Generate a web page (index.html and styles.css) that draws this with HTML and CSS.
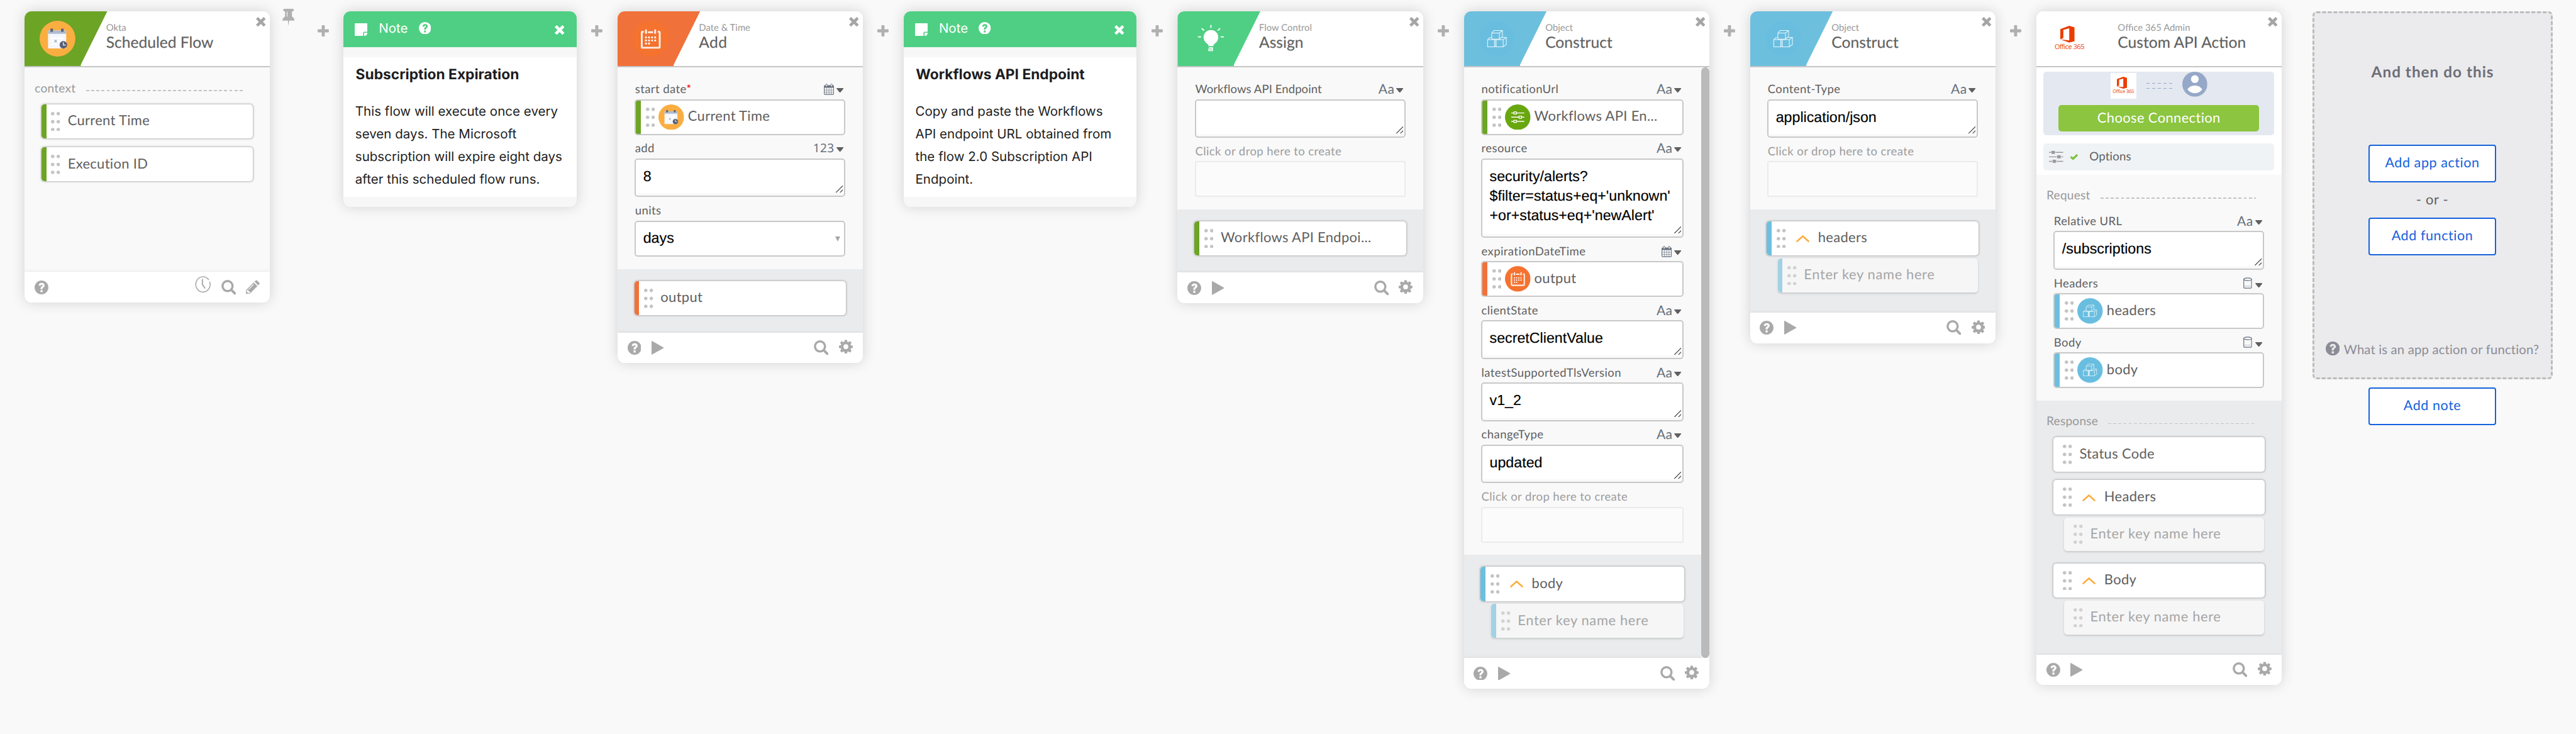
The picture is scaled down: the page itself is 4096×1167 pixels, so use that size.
FILE: index.html
```html
<!DOCTYPE html>
<html lang="en">
<head>
<meta charset="utf-8">
<title>Scheduled Flow</title>
<link rel="stylesheet" href="styles.css">
</head>
<body>
<svg class="sprite" aria-hidden="true">
  <symbol id="close" viewBox="0 0 20 20"><path d="M4.200 4.200l11.600 11.600M15.800 4.200L4.200 15.800" fill="none" stroke="currentColor" stroke-width="6" stroke-linecap="square" stroke-linejoin="round"/></symbol>
  <symbol id="plus" viewBox="0 0 22 22"><path d="M9.500 0h3a1.500 1.500 0 0 1 1.500 1.500V8h6.500A1.500 1.500 0 0 1 22 9.500v3a1.500 1.500 0 0 1-1.500 1.500H14v6.500a1.500 1.500 0 0 1-1.500 1.500h-3A1.500 1.500 0 0 1 8 20.500V14H1.500A1.500 1.500 0 0 1 0 12.500v-3A1.500 1.500 0 0 1 1.500 8H8V1.500A1.500 1.500 0 0 1 9.500 0z" fill="currentColor"/></symbol>
  <symbol id="pin" viewBox="0 0 24 34"><path d="M4 0h16a2.400 2.400 0 0 1 0 5h-1.200v10.500c3 1.500 5 4 5.200 7.500H13.200L12 34l-1.200-11H0c.2-3.500 2.200-6 5.200-7.500V5H4a2.400 2.400 0 0 1 0-5z" fill="currentColor"/><path d="M9.200 5.500v10" stroke="#f9f9f9" stroke-width="1.300"/></symbol>
  <symbol id="help" viewBox="0 0 28 28"><path fill-rule="evenodd" fill="currentColor" d="M14 0a14 14 0 1 0 0 28 14 14 0 0 0 0-28zM12 19.500h4.200v4.200H12zM8.200 9.900C8.800 6.500 11 4.700 14.300 4.700c3.500 0 6 2.100 6 5.100 0 2.300-1.200 3.400-2.700 4.400-1.200.8-1.500 1.200-1.500 2.300v.9h-4v-1.300c0-2 .8-3.100 2.400-4.100 1.100-.7 1.500-1.100 1.500-2 0-.9-.6-1.500-1.700-1.500-1.300 0-2 .8-2.300 2.400z"/></symbol>
  <symbol id="play" viewBox="0 0 24 27"><path d="M0 1.200Q0-.4 1.400.4L23.500 12.800q.9.700 0 1.400L1.400 26.600Q0 27.400 0 25.800z" fill="currentColor"/></symbol>
  <symbol id="search" viewBox="0 0 30 30"><circle cx="12.500" cy="12.500" r="10.200" fill="none" stroke="currentColor" stroke-width="4.400"/><path d="M20.500 20.500l7 7" stroke="currentColor" stroke-width="5" stroke-linecap="round"/></symbol>
  <symbol id="gear" viewBox="0 0 28 28"><path fill-rule="evenodd" fill="currentColor" d="M11.600.5h4.800l.7 3.900 1.900.8 3.300-2.300 3.400 3.400-2.300 3.300.8 1.900 3.800.6v4.800l-3.800.7-.8 1.900 2.300 3.300-3.400 3.400-3.300-2.300-1.900.8-.7 3.300h-4.800l-.7-3.300-1.900-.8-3.300 2.300-3.400-3.400 2.300-3.300-.8-1.900L0 16.900v-4.800l3.800-.6.8-1.900-2.300-3.300 3.400-3.400L9 5.200l1.900-.8zM14 9.300a4.900 4.900 0 1 0 0 9.800 4.900 4.900 0 0 0 0-9.800z"/></symbol>
  <symbol id="clock" viewBox="0 0 32 34"><path d="M27.500 7A14.500 15.500 0 1 0 30 12" fill="none" stroke="currentColor" stroke-width="2" stroke-linecap="round"/><path d="M15 6.500V17l5 7" fill="none" stroke="currentColor" stroke-width="2.400" stroke-linecap="round"/></symbol>
  <symbol id="pencil" viewBox="0 0 28 28"><path d="M0 28v-7.500L15.800 4.700l7.500 7.500L7.500 28zM17.500 3l2.300-2.300q1.400-1.300 2.800 0l4.700 4.700q1.400 1.400 0 2.800L25 10.500z" fill="currentColor"/><path d="M2 21.500L3 20l5 5-1.500 1H4.500v-2.500H2zM5.500 18.500L15.700 8.300" fill="none" stroke="#fff" stroke-width="1.500"/></symbol>
  <symbol id="note" viewBox="0 0 25 25"><path d="M1.500 0h22A1.500 1.500 0 0 1 25 1.500V16.500H18.500a2 2 0 0 0-2 2V25h-15A1.500 1.500 0 0 1 0 23.500v-22A1.500 1.500 0 0 1 1.500 0zM18.500 18.500H25Q24.500 24.500 18.500 25z" fill="currentColor"/></symbol>
  <symbol id="dots" viewBox="0 0 18 38"><g fill="currentColor"><circle cx="3.400" cy="3.500" r="3.400"/><circle cx="14.400" cy="3.500" r="3.400"/><circle cx="3.400" cy="19" r="3.400"/><circle cx="14.400" cy="19" r="3.400"/><circle cx="3.400" cy="34.500" r="3.400"/><circle cx="14.400" cy="34.500" r="3.400"/></g></symbol>
  <symbol id="chevron" viewBox="0 0 26 15"><path d="M2 13L13 3l11 10" fill="none" stroke="#fbae42" stroke-width="3.300" stroke-linecap="round"/></symbol>
  <symbol id="caret" viewBox="0 0 14 9"><path d="M.8 0h12.400q1.200.4.300 1.500L8.300 8q-1.300 1.400-2.600 0L.5 1.500Q-.4.400.8 0z" fill="#606060"/></symbol>
  <symbol id="grip" viewBox="0 0 14 14"><path d="M0 14L14 0M8 14l6-6" stroke="#444" stroke-width="1.500"/></symbol>
  <symbol id="month" viewBox="0 0 20 22"><g fill="none" stroke="#66717d"><rect x=".8" y="4" width="18.400" height="17" rx="1.200" stroke-width="1.400"/><path d="M.8 12.500h18.400M.8 16.700h18.400M5.500 8v13M10 8v13M14.500 8v13" stroke-width=".8"/></g><path d="M.8 3.500h18.400V8H.8z" fill="#66717d"/><rect x="3.500" y=".6" width="3" height="5.400" rx="1.400" fill="#fff" stroke="#66717d" stroke-width="1.200"/><rect x="13.500" y=".6" width="3" height="5.400" rx="1.400" fill="#fff" stroke="#66717d" stroke-width="1.200"/></symbol>
  <symbol id="object" viewBox="0 0 17 22"><g fill="none" stroke="#66717d" stroke-width="1.500"><ellipse cx="8.500" cy="3.600" rx="7.600" ry="2.600"/><path d="M.9 3.600v15.400q0 2.200 2.500 2.200h10.200q2.500 0 2.500-2.200V3.600"/><path d="M2.500 17h12" stroke-width=".8" stroke-dasharray="2 1"/></g></symbol>
  <symbol id="schedule" viewBox="-35 -35 70 70"><circle r="35" fill="#faae41"/><path d="M-18.500-16h35.500v35h-35.500z" fill="#f3f6fa"/><path d="M-18.500-16h35.500v6.500h-35.500z" fill="#aebbd0"/><g fill="#5a5f78"><path d="M-13.800-19.500h5v6h-5zM7-19.500h5v6H7z"/></g><path d="M-12-3h4v4h-4zM-6-3h4v4h-4zM0-3h4v4H0zM6-3h4v4H6zM-12 3h4v4h-4zM0 3h4v4H0zM-12 9h4v4h-4zM-6 9h4v4h-4z" fill="#fff"/><path d="M-6 2.500h4.500V7H-6z" fill="#aebbd0"/><circle cx="11.500" cy="12" r="7.400" fill="#5a5f78"/><path d="M11.500 7v5.500H16" fill="none" stroke="#fff" stroke-width="1.500"/></symbol>
  <symbol id="calendar" viewBox="-35 -35 70 70"><circle r="35" fill="#f5722f"/><g fill="none" stroke="#fff" stroke-opacity=".88"><path d="M-13.500-13.500h-2.200q-1.500 0-1.500 1.500V16q0 1.800 1.800 1.800h31.500q1.800 0 1.800-1.800v-28q0-1.500-1.500-1.500h-2.200M-5-12.500H5" stroke-width="3.600"/><path d="M-9-16.500v5.500M9-16.500v5.500" stroke-width="3.800" stroke-linecap="round"/></g><g fill="#fff"><circle cx="-9" cy="-2.500" r="1.900"/><circle cx="-3" cy="-2.500" r="1.900"/><circle cx="3" cy="-2.500" r="1.900"/><circle cx="9" cy="-2.500" r="1.900"/><circle cx="-9" cy="3.500" r="1.900"/><circle cx="-3" cy="3.500" r="1.900"/><circle cx="3" cy="3.500" r="1.900"/><circle cx="9" cy="3.500" r="1.900"/><circle cx="-9" cy="9.500" r="1.900"/><circle cx="-3" cy="9.500" r="1.900"/></g></symbol>
  <symbol id="cubes" viewBox="-35 -35 70 70"><circle r="35" fill="#69bee0"/><g fill="none" stroke="#fff" stroke-width="1.300" stroke-opacity=".85" stroke-linejoin="round"><path d="M-10.400-11h14.800V1h-14.800zM-10.400-11l4.500-5H10.400l-6 5M10.400-16V-4l-6 5M-18.500 2h13.500v14h-13.500zM-18.500 2l4-4h4M-5 16V2M-2 2h14v14H-2zM-2 2l3-1M12 2l6-4.500V11.500l-6 4.500M18-2.500h-8M-5 2l2.500-1V15L-5 16"/></g></symbol>
  <symbol id="bulb" viewBox="-35 -35 70 70"><path d="M0-17a14.500 14.500 0 0 1 7 27.200q-2.300 1.300-2.300 4.300h-9.400q0-3-2.300-4.300A14.500 14.500 0 0 1 0-17z" fill="#fff"/><path d="M-4 17.500h7v3h-7v3h7v-3" fill="none" stroke="#fff" stroke-width="1.900"/><path d="M0-26v4M-24.500-3.500h4.500M20-3.500h4.500M-17.500-19.500l3.500 3M17.500-19.500l-3.500 3" stroke="#fff" stroke-width="2.300" stroke-linecap="round"/></symbol>
  <symbol id="variable" viewBox="-35 -35 70 70"><circle r="35" fill="#68a70e"/><path d="M-18-11.500h36M-18 0h36M-18 11.500h36" stroke="#fff" stroke-width="2.400"/><g fill="#68a70e" stroke="#fff" stroke-width="2.200"><rect x="-10.500" y="-14.500" width="7" height="6"/><rect x="3.500" y="-3" width="7" height="6"/><rect x="-10.500" y="8.500" width="7" height="6"/></g></symbol>
  <symbol id="sliders" viewBox="0 0 28 25"><path d="M0 4h28M0 12.700h28M0 21.500h28" stroke="#999" stroke-width="1.700"/><g fill="#999" stroke="#f0f3f6" stroke-width="1"><rect x="4.200" y=".5" width="8" height="7" rx="1.200"/><rect x="15.500" y="9.200" width="8" height="7" rx="1.200"/><rect x="6.500" y="18" width="8" height="7" rx="1.200"/></g></symbol>
  <symbol id="check" viewBox="0 0 17 13"><path d="M2 6.500l4.500 4L15 2.500" fill="none" stroke="#7fc241" stroke-width="4"/></symbol>
  <symbol id="office" viewBox="0 0 28 33"><path d="M0 26.500V6.500L17.500 0 28 3v27l-10.500 3L0 26.500l17.500 2V5L6 8v16z" fill="#eb3c00"/></symbol>
  <symbol id="person" viewBox="0 0 49 49"><circle cx="24.500" cy="24.500" r="24.500" fill="#96a8c8"/><circle cx="24.500" cy="14.500" r="7.600" fill="#fff"/><path d="M10 34.500q5-7.500 14.500-7.500T39 34.500Q34 42 24.500 42T10 34.500z" fill="#fff"/></symbol>
</svg>

<main class="flow">
  <!-- Scheduled Flow -->
  <section class="card">
    <header class="head">
      <div class="flag green"><svg class="badge"><use href="#schedule"/></svg></div>
      <div class="names"><div class="app">Okta</div><h2 class="title">Scheduled Flow</h2></div>
      <svg class="close"><use href="#close"/></svg>
    </header>
    <div class="context">
      <div class="group"><span>context</span><i class="rule"></i></div>
      <div class="stack">
        <div class="chip"><i class="bar green"></i><svg class="dots"><use href="#dots"/></svg><span>Current Time</span></div>
        <div class="chip"><i class="bar green"></i><svg class="dots"><use href="#dots"/></svg><span>Execution ID</span></div>
      </div>
    </div>
    <footer class="foot"><svg class="i-help"><use href="#help"/></svg><svg class="i-clock"><use href="#clock"/></svg><svg class="i-search near"><use href="#search"/></svg><svg class="i-pencil"><use href="#pencil"/></svg></footer>
  </section>
  <svg class="pin"><use href="#pin"/></svg>
  <div class="link"><svg class="plus"><use href="#plus"/></svg></div>

  <section class="card note">
    <header class="note-head"><svg class="note-icon"><use href="#note"/></svg><span>Note</span><svg class="note-help"><use href="#help"/></svg><svg class="note-close"><use href="#close"/></svg></header>
    <div class="note-body"><h3>Subscription Expiration</h3><p>This flow will execute once every<br>seven days. The Microsoft<br>subscription will expire eight days<br>after this scheduled flow runs.</p></div>
  </section>
  <div class="link"><svg class="plus"><use href="#plus"/></svg></div>

  <!-- Date & Time: Add -->
  <section class="card">
    <header class="head">
      <div class="flag orange"><svg class="badge"><use href="#calendar"/></svg></div>
      <div class="names"><div class="app">Date &amp; Time</div><h2 class="title wide">Add</h2></div>
      <svg class="close"><use href="#close"/></svg>
    </header>
    <div class="inputs">
      <div class="label"><span>start date<b class="req">*</b></span><svg class="month"><use href="#month"/></svg><svg class="caret"><use href="#caret"/></svg></div>
      <div class="drop"><i class="bar green"></i><svg class="dots"><use href="#dots"/></svg><svg class="mini"><use href="#schedule"/></svg><span>Current Time</span></div>
      <div class="label"><span>add</span><span class="num">123</span><svg class="caret"><use href="#caret"/></svg></div>
      <div class="area">8<svg class="grip"><use href="#grip"/></svg></div>
      <div class="label"><span>units</span></div>
      <div class="select"><span>days</span><i class="down"></i></div>
    </div>
    <div class="outputs">
      <div class="chip"><i class="bar orange"></i><svg class="dots"><use href="#dots"/></svg><span>output</span></div>
    </div>
    <footer class="foot"><svg class="i-help"><use href="#help"/></svg><svg class="i-play"><use href="#play"/></svg><svg class="i-search"><use href="#search"/></svg><svg class="i-gear"><use href="#gear"/></svg></footer>
  </section>
  <div class="link"><svg class="plus"><use href="#plus"/></svg></div>

  <section class="card note">
    <header class="note-head"><svg class="note-icon"><use href="#note"/></svg><span>Note</span><svg class="note-help"><use href="#help"/></svg><svg class="note-close"><use href="#close"/></svg></header>
    <div class="note-body"><h3>Workflows API Endpoint</h3><p>Copy and paste the Workflows<br>API endpoint URL obtained from<br>the flow 2.0 Subscription API<br>Endpoint.</p></div>
  </section>
  <div class="link"><svg class="plus"><use href="#plus"/></svg></div>

  <!-- Flow Control: Assign -->
  <section class="card">
    <header class="head">
      <div class="flag mint"><svg class="badge"><use href="#bulb"/></svg></div>
      <div class="names"><div class="app">Flow Control</div><h2 class="title">Assign</h2></div>
      <svg class="close"><use href="#close"/></svg>
    </header>
    <div class="inputs">
      <div class="label tight"><span>Workflows API Endpoint</span><span class="text">Aa</span><svg class="caret"><use href="#caret"/></svg></div>
      <div class="area"><svg class="grip"><use href="#grip"/></svg></div>
      <div class="label faint"><span>Click or drop here to create</span></div>
      <div class="empty"></div>
    </div>
    <div class="outputs">
      <div class="chip"><i class="bar green"></i><svg class="dots"><use href="#dots"/></svg><span>Workflows API Endpoi...</span></div>
    </div>
    <footer class="foot"><svg class="i-help"><use href="#help"/></svg><svg class="i-play"><use href="#play"/></svg><svg class="i-search"><use href="#search"/></svg><svg class="i-gear"><use href="#gear"/></svg></footer>
  </section>
  <div class="link"><svg class="plus"><use href="#plus"/></svg></div>

  <!-- Object: Construct (body) -->
  <section class="card">
    <header class="head">
      <div class="flag blue"><svg class="badge"><use href="#cubes"/></svg></div>
      <div class="names"><div class="app">Object</div><h2 class="title">Construct</h2></div>
      <svg class="close"><use href="#close"/></svg>
    </header>
    <div class="scroller">
      <div class="scrolled">
        <div class="inputs">
          <div class="label"><span>notificationUrl</span><span class="text">Aa</span><svg class="caret"><use href="#caret"/></svg></div>
          <div class="drop"><i class="bar green"></i><svg class="dots"><use href="#dots"/></svg><svg class="mini"><use href="#variable"/></svg><span>Workflows API En...</span></div>
          <div class="label"><span>resource</span><span class="text">Aa</span><svg class="caret"><use href="#caret"/></svg></div>
          <div class="area tall">security/alerts?<br>$filter=status+eq+'unknown'<br>+or+status+eq+'newAlert'<svg class="grip"><use href="#grip"/></svg></div>
          <div class="label"><span>expirationDateTime</span><svg class="month"><use href="#month"/></svg><svg class="caret"><use href="#caret"/></svg></div>
          <div class="drop"><i class="bar orange"></i><svg class="dots"><use href="#dots"/></svg><svg class="mini"><use href="#calendar"/></svg><span>output</span></div>
          <div class="label"><span>clientState</span><span class="text">Aa</span><svg class="caret"><use href="#caret"/></svg></div>
          <div class="area">secretClientValue<svg class="grip"><use href="#grip"/></svg></div>
          <div class="label"><span>latestSupportedTlsVersion</span><span class="text">Aa</span><svg class="caret"><use href="#caret"/></svg></div>
          <div class="area">v1_2<svg class="grip"><use href="#grip"/></svg></div>
          <div class="label"><span>changeType</span><span class="text">Aa</span><svg class="caret"><use href="#caret"/></svg></div>
          <div class="area">updated<svg class="grip"><use href="#grip"/></svg></div>
          <div class="label faint"><span>Click or drop here to create</span></div>
          <div class="empty"></div>
        </div>
        <div class="outputs nested">
          <div class="chip"><i class="bar blue"></i><svg class="dots"><use href="#dots"/></svg><svg class="chevron"><use href="#chevron"/></svg><span>body</span></div>
          <div class="key"><i class="bar pale"></i><svg class="dots"><use href="#dots"/></svg><span>Enter key name here</span></div>
        </div>
      </div>
      <div class="thumb"></div>
    </div>
    <footer class="foot"><svg class="i-help"><use href="#help"/></svg><svg class="i-play"><use href="#play"/></svg><svg class="i-search"><use href="#search"/></svg><svg class="i-gear"><use href="#gear"/></svg></footer>
  </section>
  <div class="link"><svg class="plus"><use href="#plus"/></svg></div>

  <!-- Object: Construct (headers) -->
  <section class="card">
    <header class="head">
      <div class="flag blue"><svg class="badge"><use href="#cubes"/></svg></div>
      <div class="names"><div class="app">Object</div><h2 class="title">Construct</h2></div>
      <svg class="close"><use href="#close"/></svg>
    </header>
    <div class="inputs">
      <div class="label"><span>Content-Type</span><span class="text">Aa</span><svg class="caret"><use href="#caret"/></svg></div>
      <div class="area">application/json<svg class="grip"><use href="#grip"/></svg></div>
      <div class="label faint"><span>Click or drop here to create</span></div>
      <div class="empty"></div>
    </div>
    <div class="outputs nested">
      <div class="chip"><i class="bar blue"></i><svg class="dots"><use href="#dots"/></svg><svg class="chevron"><use href="#chevron"/></svg><span>headers</span></div>
      <div class="key"><i class="bar pale"></i><svg class="dots"><use href="#dots"/></svg><span>Enter key name here</span></div>
    </div>
    <footer class="foot"><svg class="i-help"><use href="#help"/></svg><svg class="i-play"><use href="#play"/></svg><svg class="i-search"><use href="#search"/></svg><svg class="i-gear"><use href="#gear"/></svg></footer>
  </section>
  <div class="link"><svg class="plus"><use href="#plus"/></svg></div>

  <!-- Office 365 Admin: Custom API Action -->
  <section class="card">
    <header class="head">
      <div class="flag"><div class="brand"><svg class="brand-mark"><use href="#office"/></svg><span>Office 365</span></div></div>
      <div class="names"><div class="app">Office 365 Admin</div><h2 class="title">Custom API Action</h2></div>
      <svg class="close"><use href="#close"/></svg>
    </header>
    <div class="setup">
      <div class="connection">
        <div class="pair"><div class="tile"><svg class="tile-mark"><use href="#office"/></svg><span>Office 365</span></div><div class="wire"><i></i><i></i></div><svg class="person"><use href="#person"/></svg></div>
        <button class="choose">Choose Connection</button>
      </div>
      <div class="options"><svg class="sliders"><use href="#sliders"/></svg><svg class="check"><use href="#check"/></svg><span>Options</span></div>
    </div>
    <div class="request">
      <div class="group"><span>Request</span><i class="rule"></i></div>
      <div class="fields">
        <div class="label"><span>Relative URL</span><span class="text">Aa</span><svg class="caret"><use href="#caret"/></svg></div>
        <div class="area">/subscriptions<svg class="grip"><use href="#grip"/></svg></div>
        <div class="label"><span>Headers</span><svg class="object"><use href="#object"/></svg><svg class="caret"><use href="#caret"/></svg></div>
        <div class="drop"><i class="bar blue"></i><svg class="dots"><use href="#dots"/></svg><svg class="mini"><use href="#cubes"/></svg><span>headers</span></div>
        <div class="label"><span>Body</span><svg class="object"><use href="#object"/></svg><svg class="caret"><use href="#caret"/></svg></div>
        <div class="drop"><i class="bar blue"></i><svg class="dots"><use href="#dots"/></svg><svg class="mini"><use href="#cubes"/></svg><span>body</span></div>
      </div>
    </div>
    <div class="response">
      <div class="group"><span>Response</span><i class="rule"></i></div>
      <div class="stack">
        <div class="chip plain"><svg class="dots"><use href="#dots"/></svg><span>Status Code</span></div>
        <div class="branch">
          <div class="chip plain"><svg class="dots"><use href="#dots"/></svg><svg class="chevron"><use href="#chevron"/></svg><span>Headers</span></div>
          <div class="key plain"><svg class="dots"><use href="#dots"/></svg><span>Enter key name here</span></div>
        </div>
        <div class="branch last">
          <div class="chip plain"><svg class="dots"><use href="#dots"/></svg><svg class="chevron"><use href="#chevron"/></svg><span>Body</span></div>
          <div class="key plain"><svg class="dots"><use href="#dots"/></svg><span>Enter key name here</span></div>
        </div>
      </div>
    </div>
    <footer class="foot"><svg class="i-help"><use href="#help"/></svg><svg class="i-play"><use href="#play"/></svg><svg class="i-search"><use href="#search"/></svg><svg class="i-gear"><use href="#gear"/></svg></footer>
  </section>

  <!-- Next step -->
  <aside class="next">
    <div class="next-box">
      <h2 class="next-title">And then do this</h2>
      <button class="add">Add app action</button>
      <div class="or">- or -</div>
      <button class="add">Add function</button>
      <div class="what"><svg class="what-icon"><use href="#help"/></svg><span>What is an app action or function?</span></div>
    </div>
    <button class="add">Add note</button>
  </aside>
</main>
</body>
</html>
```
FILE: styles.css
```css
/* 1rem is ten design pixels */
html { font-size: 8.127px; }
* { box-sizing: border-box; }
body {
  margin: 0;
  height: 143.6rem;
  overflow: hidden;
  background: #f9f9f9;
  color: #606060;
  font-family: Lato, "Open Sans", sans-serif;
  text-rendering: geometricPrecision;
}
svg { display: block; flex: none; }
.sprite { position: absolute; width: 0; height: 0; }
h2, h3, p { margin: 0; }
i { font-style: normal; }

.flow { display: flex; align-items: flex-start; padding: 2.2rem 0 0 4.8rem; }

/* connectors */
.link { flex: none; width: 8rem; display: flex; justify-content: center; padding-top: 2.75rem; }
.plus { width: 2.2rem; height: 2.2rem; color: #b0b0b0; }
.pin { width: 2.4rem; height: 3.4rem; margin: -.5rem 1.6rem 0 2.4rem; color: #b0b0b0; }

/* card shell */
.card {
  flex: none;
  width: 48rem;
  border-radius: 1.4rem;
  background: #f9f9f9;
  box-shadow: 0 0 2.6rem rgba(0, 0, 0, .16);
  overflow: hidden;
}
.head {
  display: flex;
  height: 11rem;
  background: #fff;
  border-bottom: .25rem solid #c6c6c6;
  padding-right: .8rem;
}
.flag {
  flex: none;
  width: 16.2rem;
  padding: 1.9rem 0 0 3rem;
  clip-path: polygon(0 0, 100% 0, 68% 97%, 68% 100%, 0 100%);
}
.green { background: #6ca425; }
.orange { background: #f1713a; }
.mint { background: #4fcf84; }
.blue { background: #6dbfde; }
.pale { background: #a2d1e6; }
.badge { width: 7rem; height: 7rem; }
.names { flex: 1; margin-left: -.25rem; padding-top: 2.14rem; white-space: nowrap; }
.app { font-size: 1.83rem; line-height: 2.4rem; color: #999; }
.title { font-size: 3.03rem; line-height: 3.2rem; font-weight: 400; -webkit-text-stroke: .02rem currentColor; }
.title.wide { letter-spacing: .05rem; }
.close { width: 1.9rem; height: 1.9rem; margin-top: 1.1rem; color: #a5a5a5; }
.brand, .tile { display: flex; flex-direction: column; align-items: center; color: #eb3c00; font-family: "Open Sans", sans-serif; white-space: nowrap; }
.brand { width: 7rem; padding-top: 1rem; font-size: 1.33rem; line-height: 1.8rem; letter-spacing: -.05rem; }
.brand-mark { width: 2.8rem; height: 3.3rem; margin-right: .8rem; }

.foot {
  display: flex;
  align-items: center;
  height: 6rem;
  padding: 0 2rem 0 1.95rem;
  background: #fff;
  color: #a9a9a9;
  box-shadow: 0 0 .6rem rgba(0, 0, 0, .1);
  position: relative;
}
.i-help { width: 2.7rem; height: 2.7rem; margin-right: auto; }
.i-play { width: 2.4rem; height: 2.7rem; margin-right: auto; }
.i-help:has(+ .i-play) { margin-right: 2.05rem; }
.i-search { width: 2.9rem; height: 2.9rem; margin-right: 2rem; }
.i-search.near { margin: 0 1.95rem 0 2.05rem; }
.i-gear { width: 2.7rem; height: 2.7rem; margin-top: -.4rem; }
.i-clock { width: 3.1rem; height: 3.3rem; margin-top: -1.1rem; }
.i-pencil { width: 2.7rem; height: 2.8rem; }

/* sections */
.context { height: 40rem; }
.inputs { padding: 1.6rem 3.4rem 2.4rem; }
.outputs { padding: 2.35rem 3.3rem 3.35rem; background: #eaebed; }
.outputs.nested { padding-bottom: 3.95rem; }
.group {
  display: flex;
  align-items: flex-start;
  gap: 2rem;
  padding: 2.75rem 5rem 0 2rem;
  font-size: 2.35rem;
  letter-spacing: .03rem;
  line-height: 2.8rem;
  color: #999;
}
.context .group, .response .group { height: 7.2rem; }
.request .group { height: 6.4rem; }
.rule, .wire i {
  height: .2rem;
  background: repeating-linear-gradient(90deg, #c4c4c4 0 .6rem, transparent .6rem 1rem);
}
.rule { flex: 1; margin-top: 1.7rem; }
.stack { display: flex; flex-direction: column; gap: 1.7rem; padding: 0 3.3rem; }

/* field label row */
.label {
  display: flex;
  align-items: flex-start;
  height: 4.6rem;
  padding: .6rem .4rem 0 .05rem;
  font-size: 2.28rem;
  letter-spacing: .05rem;
  line-height: 4rem;
  white-space: nowrap;
}
.label.tight { letter-spacing: .01rem; }
.label span:first-child { margin-right: auto; }
.faint { color: #9c9c9c; }
.req { color: #f00000; font-weight: 400; }
.text { font-size: 2.6rem; letter-spacing: .05rem; color: #66717d; }
.num { font: 2.35rem/4rem "Noto Sans", sans-serif; color: #66717d; letter-spacing: .05rem; }
.caret { width: 1.4rem; height: .9rem; margin: 1.85rem 0 0 .35rem; }
.month { width: 2rem; height: 2.2rem; margin-top: 1rem; }
.month + .caret { margin-left: .45rem; }
.object { width: 1.7rem; height: 2.2rem; margin-top: .9rem; }
.object + .caret { margin-left: .6rem; margin-top: 2rem; }

/* values */
.area, .select {
  position: relative;
  border: .25rem solid #c8c8c8;
  border-radius: .6rem;
  background: #fff;
  color: #000;
  font: 2.86rem/3.82rem "Liberation Sans", Arial, sans-serif;
  -webkit-text-stroke: .02rem #000;
  white-space: nowrap;
}
.area {
  height: 7.55rem;
  padding: 1.35rem 1.4rem 0;
  background: linear-gradient(#fff calc(100% - .5rem), #f9f9f9 0);
}
.area.tall { height: 15.5rem; }
.grip { position: absolute; right: .2rem; bottom: .55rem; width: 1.4rem; height: 1.4rem; }
.select { display: flex; justify-content: space-between; height: 7.1rem; padding: 1.25rem .7rem 0 1.4rem; }
.down { margin-top: 1.6rem; height: 0; border: .6rem solid transparent; border-top: 1.1rem solid #a6a6a6; border-bottom: 0; }
.empty { height: 7rem; border: .25rem solid #ebebeb; border-radius: .4rem; background: #fbfbfb; }

.drop, .chip, .key {
  display: flex;
  align-items: center;
  overflow: hidden;
  border-radius: .6rem;
  background: #fff;
  font-size: 2.7rem;
  letter-spacing: .04rem;
  white-space: nowrap;
}
.drop { height: 7rem; border: .25rem solid #c8c8c8; }
.chip { height: 6.7rem; box-shadow: 0 0 .35rem .1rem #b3b3b3; }
.key {
  height: 6.6rem;
  margin: .6rem .1rem 0 2.1rem;
  background: #f6f6f6;
  color: #a6a6a6;
  box-shadow: 0 .15rem .4rem rgba(0, 0, 0, .14);
  letter-spacing: .075rem;
}
.bar { align-self: stretch; width: .95rem; }
.dots { width: 1.8rem; height: 3.8rem; margin: 0 1.45rem 0 .95rem; color: #c4c4c4; }
.key .dots { color: #d2d2d2; }
.plain .dots { margin-left: 1.9rem; }
.drop .dots { margin: 0 .7rem 0 .95rem; }
.mini { width: 5rem; height: 5rem; margin-right: .75rem; }
.chip span, .drop span, .key span { line-height: 3.2rem; margin-bottom: .4rem; }
.chevron { width: 2.6rem; height: 1.5rem; margin: 0 1.65rem 0 .6rem; }

/* scrolling card */
.scroller { display: flex; }
.scrolled { width: 46.4rem; }
.thumb { width: 1.6rem; border-radius: .8rem; background: #bababa; }

/* notes */
.note { width: 45.6rem; background: #f7f7f7; font-family: Inter, "Open Sans", sans-serif; padding-bottom: 2rem; }
.note-head { display: flex; align-items: flex-start; height: 7rem; padding: 2.3rem 2.4rem 0 2.2rem; background: #4fcf84; color: #fff; font-size: 2.53rem; line-height: 2.4rem; }
.note-head span { margin-top: -.15rem; }
.note-icon { width: 2.5rem; height: 2.5rem; margin-right: 2.2rem; }
.note-help { width: 2.4rem; height: 2.4rem; margin: -.2rem auto 0 2.1rem; }
.note-close { width: 1.9rem; height: 1.9rem; margin-top: .4rem; }
.note-body { height: 27.3rem; margin-top: 2rem; padding: 1.9rem 0 0 2.3rem; background: #fff; color: #1d1d21; white-space: nowrap; }
.note-body h3 { font-size: 2.8rem; line-height: 3.2rem; font-weight: 700; margin-left: .1rem; }
.note-body p { margin-top: 3.25rem; font-size: 2.53rem; line-height: 4.45rem; }

/* connection panel */
.setup { height: 21rem; padding: .8rem 1.4rem; background: #fff; }
.connection { height: 12.4rem; padding: 0 3rem; border-radius: .6rem; background: #e4e8f0; }
.pair { display: flex; justify-content: center; gap: 2rem; height: 6.5rem; }
.tile { width: 5rem; height: 5rem; margin-top: .3rem; padding-top: .75rem; background: #fff; font-size: .96rem; line-height: 1.35rem; letter-spacing: -.035rem; }
.tile-mark { width: 2rem; height: 2.35rem; margin-right: .5rem; }
.wire { width: 5rem; padding-top: 2.2rem; display: flex; flex-direction: column; gap: .8rem; }
.wire i { background: repeating-linear-gradient(90deg, #96a8c8 0 .6rem, transparent .6rem 1.1rem); }
.person { width: 4.9rem; height: 4.9rem; }
button { display: block; padding: 0 0 .4rem; border: 0; font-family: inherit; text-rendering: inherit; }
.choose { width: 100%; height: 5.2rem; border-radius: .6rem; background: #8cc53f; color: #fff; font-size: 2.7rem; letter-spacing: .045rem; }
.options { display: flex; align-items: center; height: 5.4rem; margin-top: 1.6rem; padding: 0 1.1rem; border-radius: .6rem; background: #eff3f6; font-size: 2.3rem; letter-spacing: .02rem; }
.options span { margin-bottom: .3rem; }
.sliders { width: 2.8rem; height: 2.5rem; margin-right: 1.2rem; }
.check { width: 1.7rem; height: 1.3rem; margin-right: 2.2rem; }
.request { padding-bottom: 2.4rem; }
.fields { padding: 0 3.4rem; }
.response { height: 49.7rem; background: #eaebed; }
.branch.last { margin-top: .7rem; }

/* next step */
.next { width: 47rem; margin-left: 6rem; display: flex; flex-direction: column; align-items: center; gap: 1.6rem; flex: none; }
.next-box {
  display: flex;
  flex-direction: column;
  align-items: center;
  width: 100%;
  height: 72rem;
  padding-top: 10rem;
  border: .4rem dashed #bbb;
  border-radius: .8rem;
  background: #ebebed;
}
.next-title { height: 15.7rem; font-size: 3rem; line-height: 3.2rem; letter-spacing: .12rem; font-weight: 700; color: #6e6e78; padding-left: .12rem; }
.add {
  width: 25rem;
  height: 7.4rem;
  border: .25rem solid #1662dd;
  border-radius: .5rem;
  background: #fff;
  color: #1662dd;
  font-size: 2.65rem;
  letter-spacing: .07rem;
}
.or { height: 6.9rem; font-size: 2.7rem; line-height: 6.6rem; letter-spacing: .08rem; }
.what { display: flex; align-items: flex-start; gap: .8rem; margin-top: 16.8rem; color: #8c8c96; font-size: 2.5rem; letter-spacing: .02rem; line-height: 3.2rem; white-space: nowrap; }
.what-icon { width: 2.75rem; height: 2.75rem; }
```
